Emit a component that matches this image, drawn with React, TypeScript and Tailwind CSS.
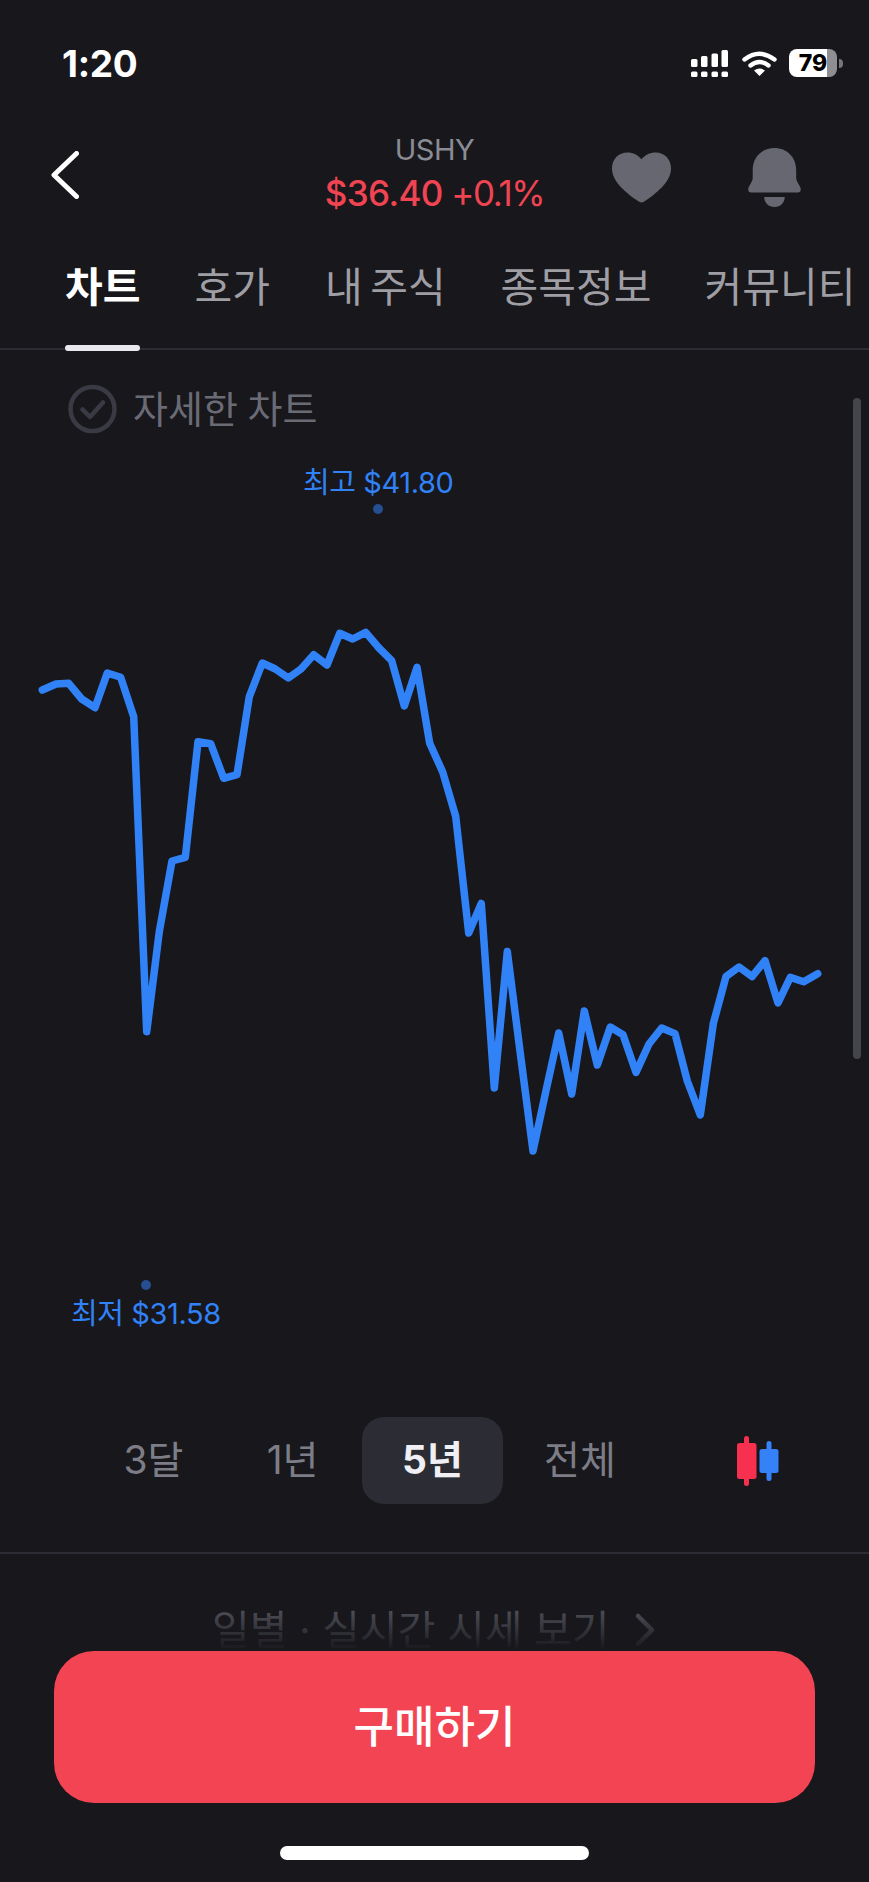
const KR = "font-['Inter','Noto_Sans_CJK_KR',sans-serif]";

const chartPoints = [
  [42.3, 690], [56, 684], [68.7, 683.3], [81.7, 699], [95, 707.7], [107.3, 673], [120.7, 677.3], [133.7, 716.7],
  [146.7, 1031.7], [159.3, 931.7], [172, 861], [185.3, 857.3], [198, 741.7], [210.7, 743.7], [223.7, 778.3],
  [237, 774.7], [249.3, 696.7], [262.3, 663], [275.3, 669], [288.3, 678], [301, 669], [313.7, 654.7], [327, 665],
  [339.7, 633.3], [352.7, 639], [365.7, 632.3], [379, 648], [391.7, 660.7], [404.3, 706], [417, 667.3],
  [429.7, 743.3], [442.7, 772], [455.7, 816.4], [468.7, 933], [481.3, 903.4], [494.3, 1088], [507.3, 951.5],
  [520, 1051], [533, 1151], [545.7, 1092], [558.7, 1033], [571.7, 1094], [584.3, 1011], [597.3, 1065],
  [610.3, 1027], [623, 1034.7], [636, 1072.4], [649, 1044], [661.7, 1028], [675, 1033.6], [687.3, 1081],
  [700.3, 1115], [713.3, 1023.6], [726, 976.6], [739, 967], [752, 976.6], [765, 960.7], [778, 1003],
  [790.3, 977.4], [803.7, 981.8], [817.7, 973.7],
]

// chart section starts at y=434 in the page
const CHART_TOP = 434
const polyline = chartPoints.map(([x, y]) => `${x},${y - CHART_TOP}`).join(' ')

function SignalIcon() {
  return (
    <svg width="37" height="27" viewBox="0 0 37 27" fill="white">
      <rect x="0" y="9" width="6.5" height="8" rx="1.5" />
      <rect x="10" y="6" width="6.5" height="11" rx="1.5" />
      <rect x="20.5" y="3.5" width="6.5" height="13.5" rx="1.5" />
      <rect x="30.5" y="0" width="6.5" height="17" rx="1.5" />
      <rect x="0" y="21.5" width="6.5" height="5.5" rx="1.5" />
      <rect x="10" y="21.5" width="6.5" height="5.5" rx="1.5" />
      <rect x="20.5" y="21.5" width="6.5" height="5.5" rx="1.5" />
      <rect x="30.5" y="21.5" width="6.5" height="5.5" rx="1.5" />
    </svg>
  )
}

function WifiIcon() {
  return (
    <svg width="35" height="25" viewBox="0 0 35 25" fill="none">
      <path d="M2.5 8.5 Q17.5 -3 32.5 8.5" stroke="white" strokeWidth="4.4" strokeLinecap="round" />
      <path d="M8.5 14.5 Q17.5 7.5 26.5 14.5" stroke="white" strokeWidth="4.4" strokeLinecap="round" />
      <path d="M12 19.6 Q17.5 15.6 23 19.6 L17.5 25 Z" fill="white" />
    </svg>
  )
}

function HeartIcon() {
  return (
    <svg width="59" height="51" viewBox="0 0 60 51" fill="#676771">
      <path d="M30 51 C28.5 51 27 50 25 48.500 C12 39 0 29 0 16 C0 6.500 7 0 15.500 0 C21.500 0 26.500 2.500 30 7 C33.500 2.500 38.500 0 44.500 0 C53 0 60 6.500 60 16 C60 29 48 39 35 48.500 C33 50 31.500 51 30 51 Z" />
    </svg>
  )
}

function BellIcon() {
  return (
    <svg width="53" height="59" viewBox="0 0 52.600 59" fill="#676771">
      <path d="M26.300 0 C38.500 0 48 9 48 22 L48 30 C48 34 52.600 38 52.600 41.500 C52.600 43.500 51.500 44.500 49.500 44.500 L3 44.500 C1 44.500 0 43.500 0 41.500 C0 38 4.500 34 4.500 30 L4.500 22 C4.500 9 14 0 26.300 0 Z" />
      <path d="M16 49 L36.500 49 C36.500 55 32 59 26.300 59 C20.500 59 16 55 16 49 Z" />
    </svg>
  )
}

function CandleIcon() {
  return (
    <svg width="42" height="50" viewBox="0 0 42 50">
      <rect x="7" y="0" width="5" height="50" rx="2.500" fill="#f8304f" />
      <rect x="0" y="7" width="19.500" height="36" rx="2.500" fill="#f8304f" />
      <rect x="29.500" y="5" width="5" height="40" rx="2.500" fill="#3582f8" />
      <rect x="22.500" y="13" width="19" height="24" rx="2.500" fill="#3582f8" />
    </svg>
  )
}

export default function App() {
  return (
    <div className={`relative h-[1882px] w-[869px] overflow-hidden bg-[#17171c] text-white ${KR}`}>
      {/* STATUS BAR */}
      <div className="flex h-[128px] items-start justify-between pl-[62px] pr-[26px] pt-[49px]">
        <span className="text-[37px] leading-[30px] font-bold tracking-[-0.3px]">1:20</span>
        <div className="flex items-center">
          <SignalIcon />
          <div className="ml-[14px]"><WifiIcon /></div>
          <div className="ml-[12px] flex h-[28px] w-[48px] items-center justify-center rounded-[8px] bg-[linear-gradient(to_right,white_79%,#8e8e93_79%)] text-[23px] leading-none font-extrabold text-black">
            79
          </div>
          <div className="ml-[2px] h-[9px] w-[4px] rounded-r-full bg-[#77777c]" />
        </div>
      </div>

      {/* HEADER */}
      <div className="grid h-[112px] grid-cols-[1fr_auto_1fr] items-start">
        <div className="pl-[51px] pt-[23px]">
          <svg width="28" height="48" viewBox="0 0 28 48" fill="none">
            <path d="M25.500 2.500 L3 24 L25.500 45.500" stroke="white" strokeWidth="5" strokeLinecap="round" strokeLinejoin="round" />
          </svg>
        </div>
        <div className="flex flex-col items-center pt-[5px]">
          <span className="text-[29px] leading-[34px] tracking-[-0.5px] text-[#8b8b94]">USHY</span>
          <span className="mt-[6px] text-[35px] leading-[40px] tracking-[-1.4px] text-[#f04452]">
            <span className="font-medium tracking-[-0.6px]">$36.40</span> +0.1%
          </span>
        </div>
        <div className="flex items-start pl-[68px] pt-[20px]">
          <div className="pt-[4px]"><HeartIcon /></div>
          <div className="ml-[77px]"><BellIcon /></div>
        </div>
      </div>

      {/* TABS */}
      <div className="flex h-[110px] items-start border-b-2 border-[#2c2c35] pl-[65px] pt-[22px] text-[41px] leading-[50px] text-[#9e9ea4]">
        <div className="relative font-bold text-white">
          차트
          <div className="absolute inset-x-0 top-[83px] h-[6px] rounded-full bg-[#e8e8ee]" />
        </div>
        <span className="ml-[54px]">호가</span>
        <span className="ml-[55px] [word-spacing:-4px]">내 주식</span>
        <span className="ml-[55px]">종목정보</span>
        <span className="ml-[53px]">커뮤니티</span>
      </div>

      {/* DETAIL CHART TOGGLE */}
      <div className="mt-[34px] flex h-[50px] items-center pl-[68px]">
        <svg width="49" height="50" viewBox="0 0 49 50" fill="none">
          <circle cx="24.500" cy="25" r="22" stroke="#3a3a45" strokeWidth="4.500" />
          <path d="M14.500 25.500 L22 33 L35 18.500" stroke="#3a3a45" strokeWidth="4.500" strokeLinecap="round" strokeLinejoin="round" />
        </svg>
        <span className="ml-[16px] text-[38px] leading-[40px] [word-spacing:-1px] text-[#6b6b76]">자세한 차트</span>
      </div>

      {/* CHART */}
      <div className="relative h-[983px]">
        <div className="absolute left-[303px] top-[32px] text-[29px] leading-[34px] tracking-[-0.4px] text-[#3182f6]">최고 $41.80</div>
        <div className="absolute left-[373px] top-[70px] h-[10px] w-[10px] rounded-full bg-[#264f92]" />
        <svg width="869" height="983" viewBox="0 0 869 983" fill="none">
          <polyline points={polyline} stroke="#3182f6" strokeWidth="7.500" strokeLinecap="round" strokeLinejoin="round" />
        </svg>
        <div className="absolute left-[141px] top-[846px] h-[10px] w-[10px] rounded-full bg-[#264f92]" />
        <div className="absolute left-[71px] top-[863px] text-[29px] leading-[34px] tracking-[-0.4px] text-[#3182f6]">최저 $31.58</div>
      </div>

      {/* RANGE SELECTOR */}
      <div className="flex h-[87px] items-center pl-[84px] text-[39px] text-[#7d7d87]">
        <div className="flex h-full w-[139px] items-center justify-center">3달</div>
        <div className="flex h-full w-[139px] items-center justify-center">1년</div>
        <div className="flex h-full w-[141px] items-center justify-center rounded-[22px] bg-[#2c2c35] font-bold text-[#f0f0f4]">5년</div>
        <div className="flex h-full w-[154px] items-center justify-center">전체</div>
        <div className="ml-[80px]"><CandleIcon /></div>
      </div>

      <div className="mt-[48px] h-[2px] bg-[#2c2c35]" />

      {/* DAILY LINK */}
      <div className="flex items-center pl-[212px] pt-[52px] text-[41px] leading-[48px] text-[#5c5c66]">
        <span>일별 · 실시간 시세 보기</span>
        <svg className="ml-[26px]" width="20" height="34" viewBox="0 0 20 34" fill="none">
          <path d="M3 3 L17 17 L3 31" stroke="#5c5c66" strokeWidth="4.500" strokeLinecap="round" strokeLinejoin="round" />
        </svg>
      </div>

      {/* BUY BUTTON */}
      <div className="absolute inset-x-0 bottom-0">
        <div className="h-[52px] bg-linear-to-b from-transparent to-[#17171c]" />
        <div className="bg-[#17171c] px-[54px]">
          <button className="flex h-[152px] w-[761px] items-center justify-center rounded-[40px] bg-[#f24453] text-[44px] font-medium text-white">
            구매하기
          </button>
          <div className="flex justify-center pb-[22px] pt-[43px]">
            <div className="h-[14px] w-[309px] rounded-full bg-white" />
          </div>
        </div>
      </div>

      {/* SCROLLBAR */}
      <div className="absolute left-[853px] top-[398px] h-[661px] w-[8px] rounded-full bg-[#44444b]" />
    </div>
  )
}
